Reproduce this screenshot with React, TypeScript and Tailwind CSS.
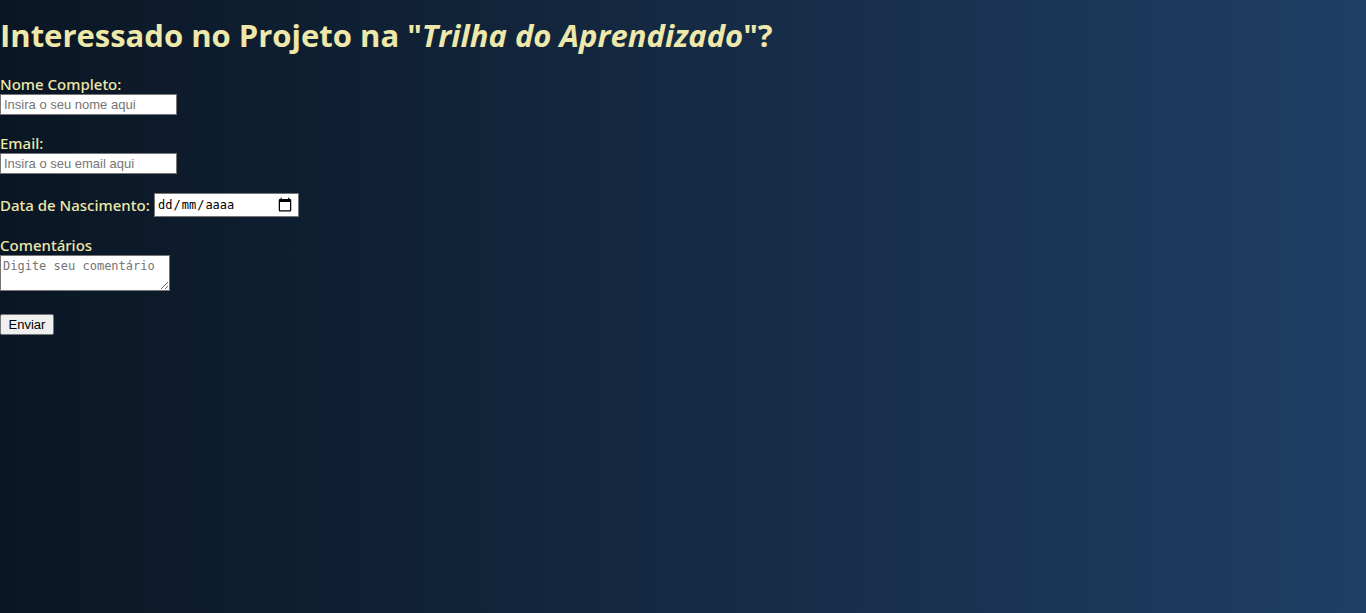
import { useState } from "react";

export default function App() {
  const [birthDate, setBirthDate] = useState("");
  const [editing, setEditing] = useState(false);
  const showHint = birthDate === "" && !editing;

  return (
    <main className="min-h-screen bg-linear-to-r from-[#0a1624] to-[#203f65] font-['Noto_Sans','Open_Sans',sans-serif] text-[15px] leading-[19px] font-medium text-[#eee8aa]">
      <h1 className="pt-4 pb-[21px] font-['Open_Sans',sans-serif] text-[31px] leading-[38px] font-bold">
        Interessado no Projeto na "<em>Trilha do Aprendizado</em>"?
      </h1>
      <form className="flex flex-col items-start gap-[19px]" onSubmit={(e) => e.preventDefault()}>
        <div className="flex flex-col items-start">
          <label htmlFor="name">Nome Completo:</label>
          <input
            id="name"
            type="text"
            placeholder="Insira o seu nome aqui"
            className="h-[21px] w-[177px] border border-[#767676] bg-white px-[3px] font-['Liberation_Sans',sans-serif] text-[13px] font-normal text-black placeholder:text-[#757575]"
          />
        </div>
        <div className="flex flex-col items-start">
          <label htmlFor="email">Email:</label>
          <input
            id="email"
            type="email"
            placeholder="Insira o seu email aqui"
            className="h-[21px] w-[177px] border border-[#767676] bg-white px-[3px] font-['Liberation_Sans',sans-serif] text-[13px] font-normal text-black placeholder:text-[#757575]"
          />
        </div>
        <div className="flex items-center gap-1">
          <label htmlFor="birth" className="min-w-[150px]">Data de Nascimento:</label>
          <div className="relative font-['DejaVu_Sans_Mono',monospace] text-[12px] font-normal text-black">
            <input
              id="birth"
              type="date"
              value={birthDate}
              onChange={(e) => setBirthDate(e.target.value)}
              onFocus={() => setEditing(true)}
              onBlur={() => setEditing(false)}
              className={
                showHint
                  ? "block h-6 w-[145px] border border-[#767676] bg-white px-[3px] [&::-webkit-calendar-picker-indicator]:size-4 [&::-webkit-datetime-edit]:opacity-0"
                  : "block h-6 w-[145px] border border-[#767676] bg-white px-[3px] [&::-webkit-calendar-picker-indicator]:size-4"
              }
            />
            {showHint && (
              <span aria-hidden="true" className="pointer-events-none absolute inset-y-0 left-1 flex items-center">
                <span className="pr-px">dd</span>/<span className="px-px">mm</span>/<span className="pl-px">aaaa</span>
              </span>
            )}
          </div>
        </div>
        <div className="flex flex-col items-start">
          <label htmlFor="comments">Comentários</label>
          <textarea
            id="comments"
            placeholder="Digite seu comentário"
            className="block h-9 w-[170px] resize border border-[#767676] bg-white px-0.5 py-0.5 font-['DejaVu_Sans_Mono',monospace] text-[12px] leading-4 font-normal text-black placeholder:text-[#757575]"
          />
        </div>
        <button
          type="submit"
          className="mt-1 h-[21px] w-[54px] rounded-xs border border-[#767676] bg-[#efefef] text-center font-['Liberation_Sans',sans-serif] text-[13px] font-normal text-black"
        >
          Enviar
        </button>
      </form>
    </main>
  );
}
